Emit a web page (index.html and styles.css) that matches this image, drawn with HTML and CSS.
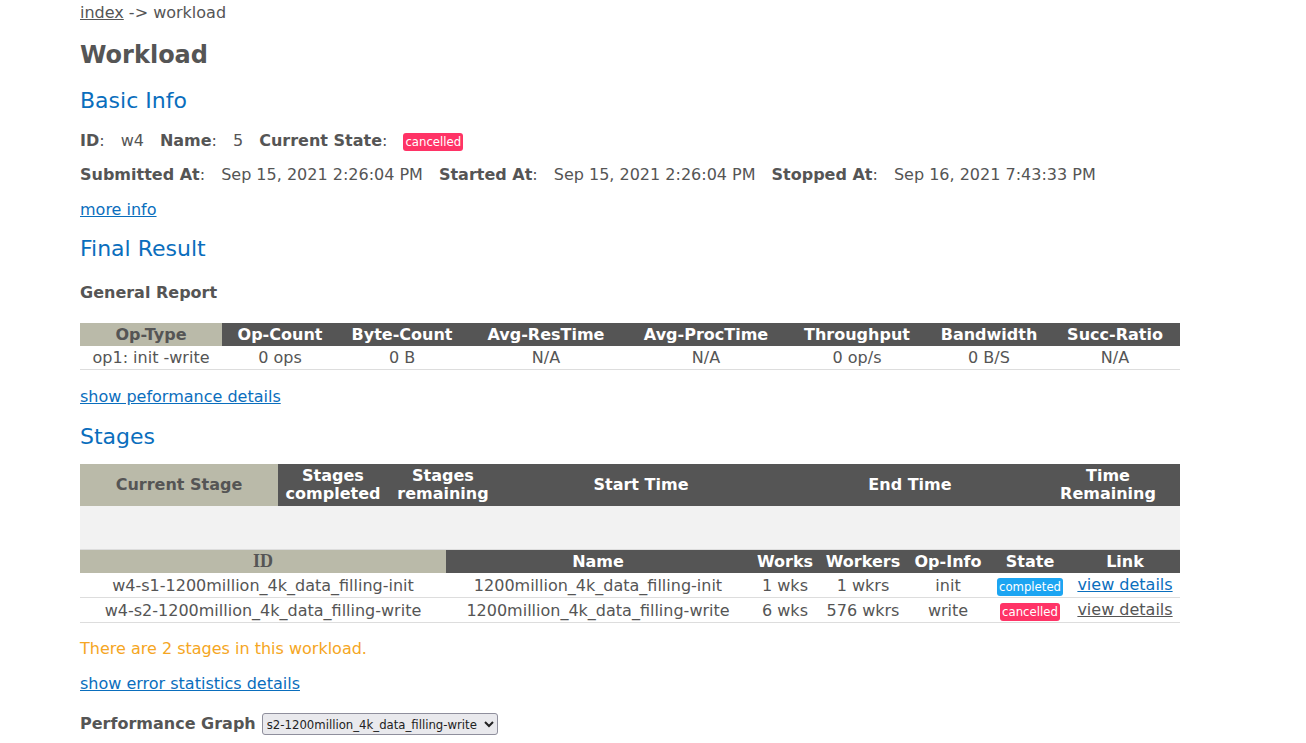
FILE: index.html
```html
<!DOCTYPE html>
<html>
<head>
<meta charset="utf-8">
<title>Workload</title>
<link rel="stylesheet" href="styles.css">
</head>
<body>
<div class="page">
  <div class="crumb"><a href="#" class="crumb-link">index</a> -&gt; workload</div>
  <h1 class="title">Workload</h1>
  <h2 class="section basic">Basic Info</h2>
  <div class="info-row row1">
    <span class="lbl">ID</span>:<span class="val">w4</span>
    <span class="lbl">Name</span>:<span class="val">5</span>
    <span class="lbl">Current State</span>:<span class="val"><span class="badge cancelled">cancelled</span></span>
  </div>
  <div class="info-row row2">
    <span class="lbl">Submitted At</span>:<span class="val">Sep 15, 2021 2:26:04 PM</span>
    <span class="lbl">Started At</span>:<span class="val">Sep 15, 2021 2:26:04 PM</span>
    <span class="lbl">Stopped At</span>:<span class="val">Sep 16, 2021 7:43:33 PM</span>
  </div>
  <a href="#" class="link more">more info</a>
  <h2 class="section final">Final Result</h2>
  <h4 class="subhead">General Report</h4>
  <table class="grid report">
    <thead>
      <tr><th class="key">Op-Type</th><th>Op-Count</th><th>Byte-Count</th><th>Avg-ResTime</th><th>Avg-ProcTime</th><th>Throughput</th><th>Bandwidth</th><th>Succ-Ratio</th></tr>
    </thead>
    <tbody>
      <tr><td>op1: init -write</td><td>0 ops</td><td>0 B</td><td>N/A</td><td>N/A</td><td>0 op/s</td><td>0 B/S</td><td>N/A</td></tr>
    </tbody>
  </table>
  <a href="#" class="link perf">show peformance details</a>
  <h2 class="section stages">Stages</h2>
  <table class="grid current">
    <thead>
      <tr><th class="key">Current Stage</th><th>Stages<br>completed</th><th>Stages<br>remaining</th><th>Start Time</th><th>End Time</th><th>Time<br>Remaining</th></tr>
    </thead>
    <tbody>
      <tr class="empty"><td></td><td></td><td></td><td></td><td></td><td></td></tr>
    </tbody>
  </table>
  <table class="grid stagelist">
    <thead>
      <tr><th class="key serif">ID</th><th>Name</th><th>Works</th><th>Workers</th><th>Op-Info</th><th>State</th><th>Link</th></tr>
    </thead>
    <tbody>
      <tr><td>w4-s1-1200million_4k_data_filling-init</td><td>1200million_4k_data_filling-init</td><td>1 wks</td><td>1 wkrs</td><td>init</td><td><span class="badge completed">completed</span></td><td><a href="#" class="link">view details</a></td></tr>
      <tr><td>w4-s2-1200million_4k_data_filling-write</td><td>1200million_4k_data_filling-write</td><td>6 wks</td><td>576 wkrs</td><td>write</td><td><span class="badge cancelled">cancelled</span></td><td><a href="#" class="link visited">view details</a></td></tr>
    </tbody>
  </table>
  <p class="note">There are 2 stages in this workload.</p>
  <a href="#" class="link errs">show error statistics details</a>
  <div class="graph">
    <span class="graph-label">Performance Graph</span>
    <select class="graph-select"><option>s2-1200million_4k_data_filling-write</option></select>
  </div>
</div>
</body>
</html>
```

FILE: styles.css
```css
html, body {
  margin: 0;
  padding: 0;
  background: #fff;
}
body {
  font-family: "DejaVu Sans", sans-serif;
  font-size: 16px;
  color: #555;
}
.page {
  width: 1100px;
  padding: 1px 0 0 80px;
  display: flex;
  flex-direction: column;
  align-items: flex-start;
}
.crumb {
  line-height: 24px;
}
.crumb-link {
  color: #555;
}
.title {
  margin: 14px 0 0;
  font-size: 24px;
  line-height: 32px;
  font-weight: bold;
  color: #555;
}
.section {
  margin: 0;
  font-weight: normal;
  font-size: 22px;
  line-height: 30px;
  color: #0a6ebd;
}
.basic { margin-top: 15px; }
.final { margin-top: 12px; }
.stages { margin-top: 13px; }
.info-row {
  line-height: 24px;
  display: flex;
  align-items: center;
  white-space: pre;
}
.row1 { margin-top: 13px; }
.row2 { margin-top: 10px; }
.lbl {
  font-weight: bold;
}
.val {
  margin: 0 16px 0 16px;
}
.badge {
  display: inline-block;
  color: #fff;
  font-size: 13px;
  line-height: 18px;
  padding: 0 2px;
  border-radius: 3px;
  font-family: "DejaVu Sans Condensed", "DejaVu Sans", sans-serif;
  font-stretch: condensed;
}
.badge.cancelled { background: #ff3366; }
.badge.completed { background: #1ca5f2; }
.link {
  color: #0a6ebd;
  text-decoration: underline;
  line-height: 24px;
}
.link.visited { color: #555; }
.more { margin-top: 11px; }
.subhead {
  margin: 17px 0 0;
  font-size: 16px;
  line-height: 24px;
  font-weight: bold;
}
.grid {
  width: 1100px;
  border-collapse: collapse;
  table-layout: fixed;
  text-align: center;
}
.grid th {
  background: #555;
  color: #fff;
  font-weight: bold;
  padding: 0;
  line-height: 23px;
  height: 23px;
}
.grid th.key {
  background: #babaa9;
  color: #555;
}
.grid td {
  padding: 0;
  height: 23px;
  line-height: 23px;
  border-bottom: 1px solid #ddd;
  white-space: nowrap;
}
.report { margin-top: 18px; }
.report th:nth-child(1) { width: 142px; }
.report th:nth-child(2) { width: 116px; }
.report th:nth-child(3) { width: 128px; }
.report th:nth-child(4) { width: 160px; }
.report th:nth-child(5) { width: 160px; }
.report th:nth-child(6) { width: 142px; }
.report th:nth-child(7) { width: 122px; }
.report th:nth-child(8) { width: 130px; }
.perf { margin-top: 15px; }
.current { margin-top: 12px; }
.current th {
  height: 42px;
  line-height: 18px;
}
.current th:nth-child(1) { width: 198px; }
.current th:nth-child(2) { width: 110px; }
.current th:nth-child(3) { width: 110px; }
.current th:nth-child(4) { width: 286px; }
.current th:nth-child(5) { width: 252px; }
.current th:nth-child(6) { width: 144px; }
.current tr.empty td {
  background: #f2f2f2;
  height: 43px;
}
.stagelist th:nth-child(1) { width: 366px; }
.stagelist th:nth-child(2) { width: 304px; }
.stagelist th:nth-child(3) { width: 70px; }
.stagelist th:nth-child(4) { width: 86px; }
.stagelist th:nth-child(5) { width: 84px; }
.stagelist th:nth-child(6) { width: 80px; }
.stagelist th:nth-child(7) { width: 110px; }
.grid th.serif {
  font-family: "Liberation Serif", serif;
  font-size: 18px;
}
.note {
  margin: 14px 0 0;
  line-height: 24px;
  color: #f5a623;
}
.errs { margin-top: 11px; }
.graph {
  margin-top: 16px;
  display: flex;
  align-items: center;
  gap: 6px;
  line-height: 24px;
}
.graph-label {
  font-weight: bold;
  font-size: 16px;
}
.graph-select {
  font-family: "DejaVu Sans Condensed", "DejaVu Sans", sans-serif;
  font-stretch: condensed;
  font-size: 13px;
  height: 22px;
  width: 236px;
  color: #222;
  background: #e9e9ed;
  border: 1px solid #8f8f9d;
  border-radius: 3px;
}
```
